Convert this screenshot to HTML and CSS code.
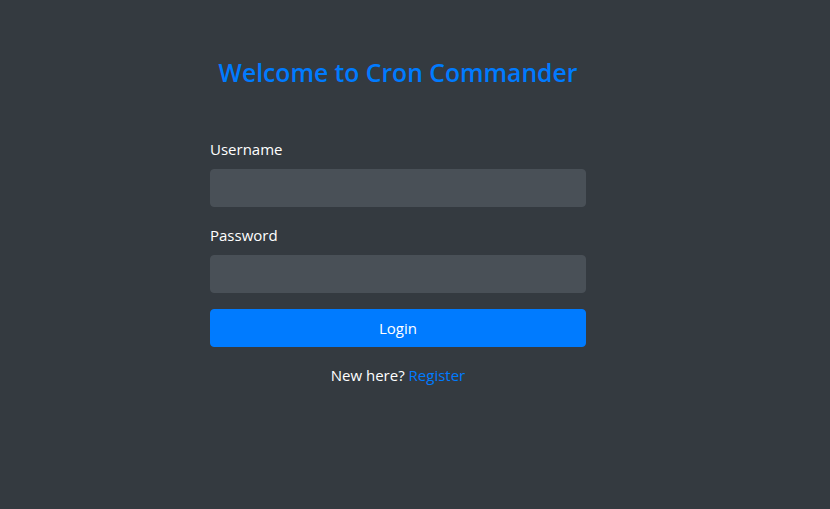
FILE: index.html
```html
<!DOCTYPE html>
<html lang="en">
<head>
<meta charset="utf-8">
<title>Cron Commander - Login</title>
<link rel="stylesheet" href="styles.css">
</head>
<body>
<main class="container">
  <h3 class="title">Welcome to Cron Commander</h3>
  <form class="login-form">
    <div class="form-group">
      <label class="label" for="username">Username</label>
      <input class="input" id="username" type="text">
    </div>
    <div class="form-group">
      <label class="label" for="password">Password</label>
      <input class="input" id="password" type="password">
    </div>
    <button class="btn" type="button">Login</button>
  </form>
  <p class="register">New here? <a class="link" href="#">Register</a></p>
</main>
</body>
</html>
```

FILE: styles.css
```css
* { box-sizing: border-box; }
html, body { margin: 0; height: 100%; }
body {
  background: #343a40;
  color: #ffffff;
  font-family: "Open Sans", "Noto Sans", sans-serif;
  font-size: 15px;
  line-height: 24px;
  display: flex;
  justify-content: center;
  align-items: flex-start;
  padding-right: 34px;
}
.container {
  width: 376px;
  padding-top: 56px;
}
.title {
  margin: 0 0 47px;
  text-align: center;
  color: #007bff;
  font-size: 24.7px;
  font-weight: 600;
  line-height: 34px;
  white-space: nowrap;
}
.login-form { margin: 0; }
.form-group { margin-bottom: 16px; }
.label {
  display: block;
  margin-bottom: 8px;
}
.input {
  display: block;
  width: 100%;
  height: 38px;
  border: 1px solid #495057;
  border-radius: 4px;
  background: #495057;
  color: #fff;
  font: inherit;
  padding: 6px 12px;
}
.btn {
  display: block;
  width: 100%;
  height: 38px;
  border: 1px solid #007bff;
  border-radius: 4px;
  background: #007bff;
  color: #fff;
  font: inherit;
  cursor: pointer;
}
.register {
  margin: 16px 0 0;
  text-align: center;
}
.link { color: #007bff; text-decoration: none; }
```
